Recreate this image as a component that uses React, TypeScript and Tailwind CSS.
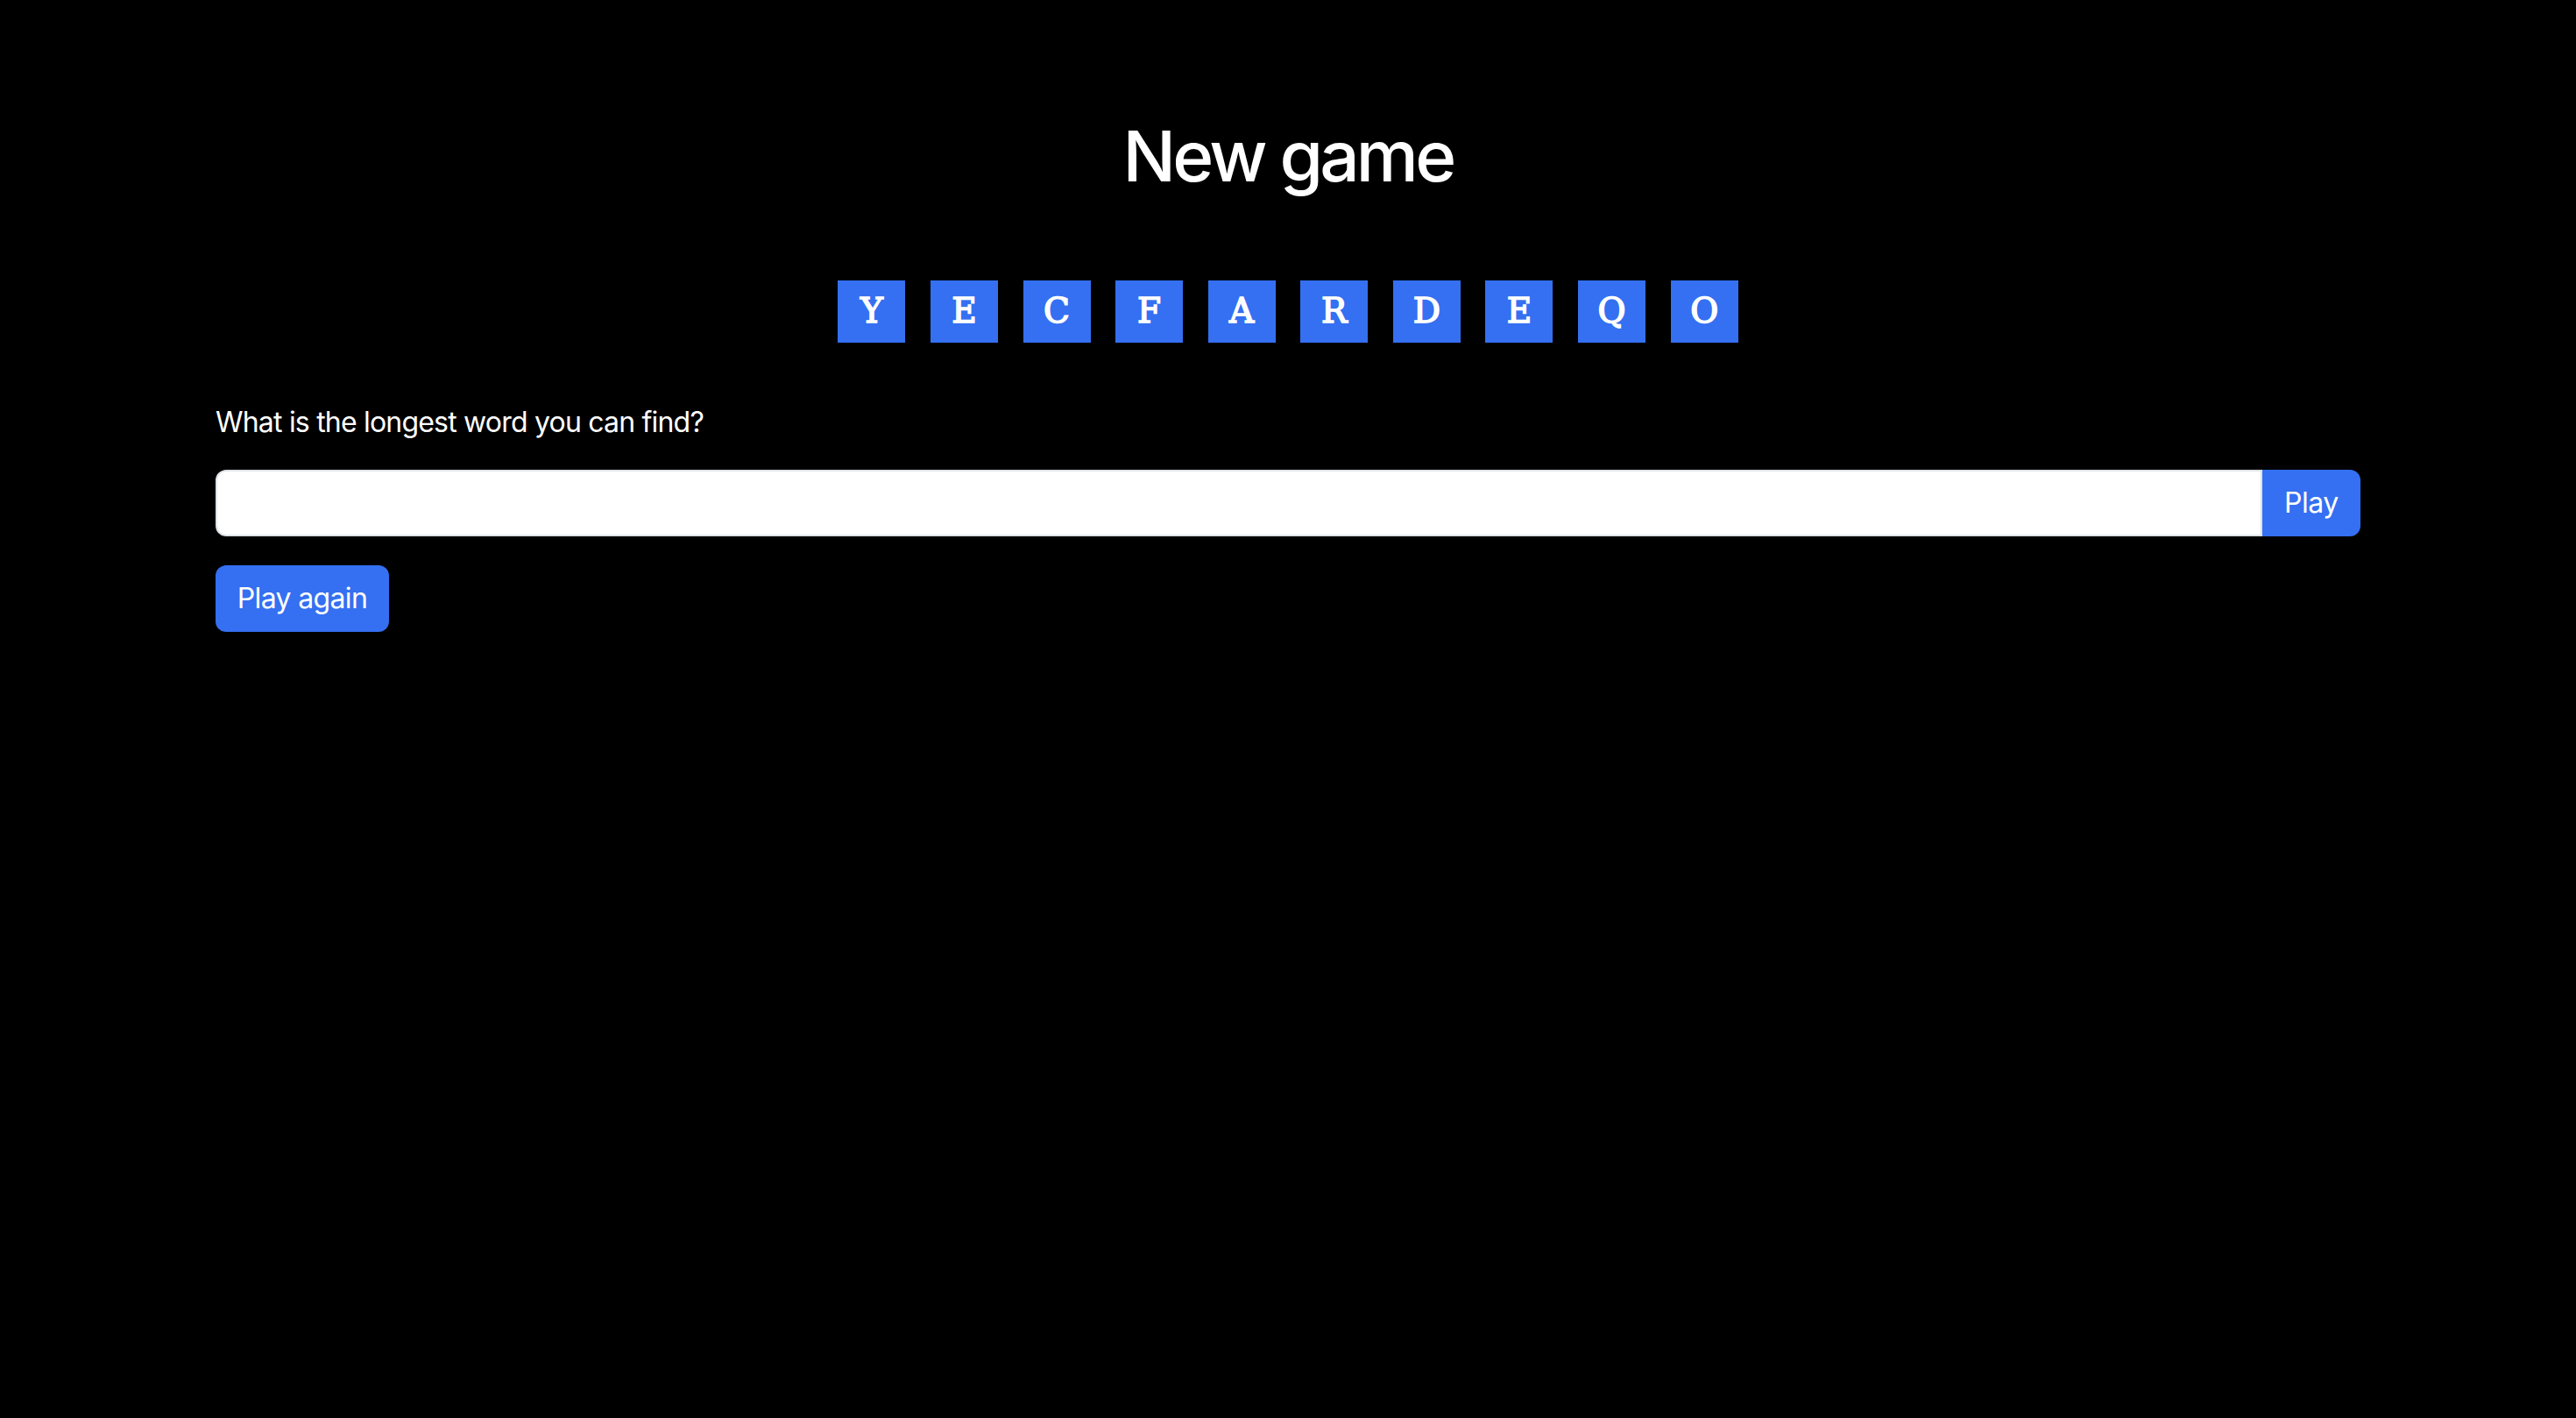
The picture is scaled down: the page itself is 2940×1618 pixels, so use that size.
import React, { useState } from 'react';

const letters = ['Y', 'E', 'C', 'F', 'A', 'R', 'D', 'E', 'Q', 'O'];

const sans = { fontFamily: 'Inter, "Liberation Sans", sans-serif' };

export default function App() {
  const [word, setWord] = useState('');

  return (
    <div className="min-h-screen w-full bg-black text-white" style={sans}>
      <div className="mx-auto w-[2448px]">
        {/* 見出し */}
        <h1 className="pt-[130px] text-center text-[80px] font-medium leading-[96px] tracking-[-0.047em]">New game</h1>

        {/* 文字タイル */}
        <div className="mt-[94px] flex justify-center gap-[28.6px]">
          {letters.map((l, i) => (
            <div
              key={i}
              className="flex h-[71px] w-[77px] items-center justify-center bg-[#3470f1] text-[39px] font-normal text-white"
              style={{ fontFamily: '"DejaVu Serif", "Courier New", serif', WebkitTextStroke: '1.6px white' }}
            >
              {l}
            </div>
          ))}
        </div>

        <p className="mt-[67px] mb-[30px] text-[32px] leading-[48px] tracking-[-0.025em]">
          What is the longest word you can find?
        </p>

        {/* 入力欄 */}
        <div className="flex h-[76px]">
          <input
            type="text"
            value={word}
            onChange={(e) => setWord(e.target.value)}
            className="h-full flex-1 rounded-l-[12px] border-2 border-[#dee2e6] bg-white px-6 text-[32px] text-black outline-none"
          />
          <button className="h-full w-[112px] rounded-r-[12px] bg-[#3470f1] text-[32px] tracking-[-0.015em] text-white">
            Play
          </button>
        </div>

        <button className="mt-[33px] h-[76px] w-[198px] rounded-[12px] bg-[#3470f1] text-[32px] tracking-[-0.02em] text-white">
          Play again
        </button>
      </div>
    </div>
  );
}
